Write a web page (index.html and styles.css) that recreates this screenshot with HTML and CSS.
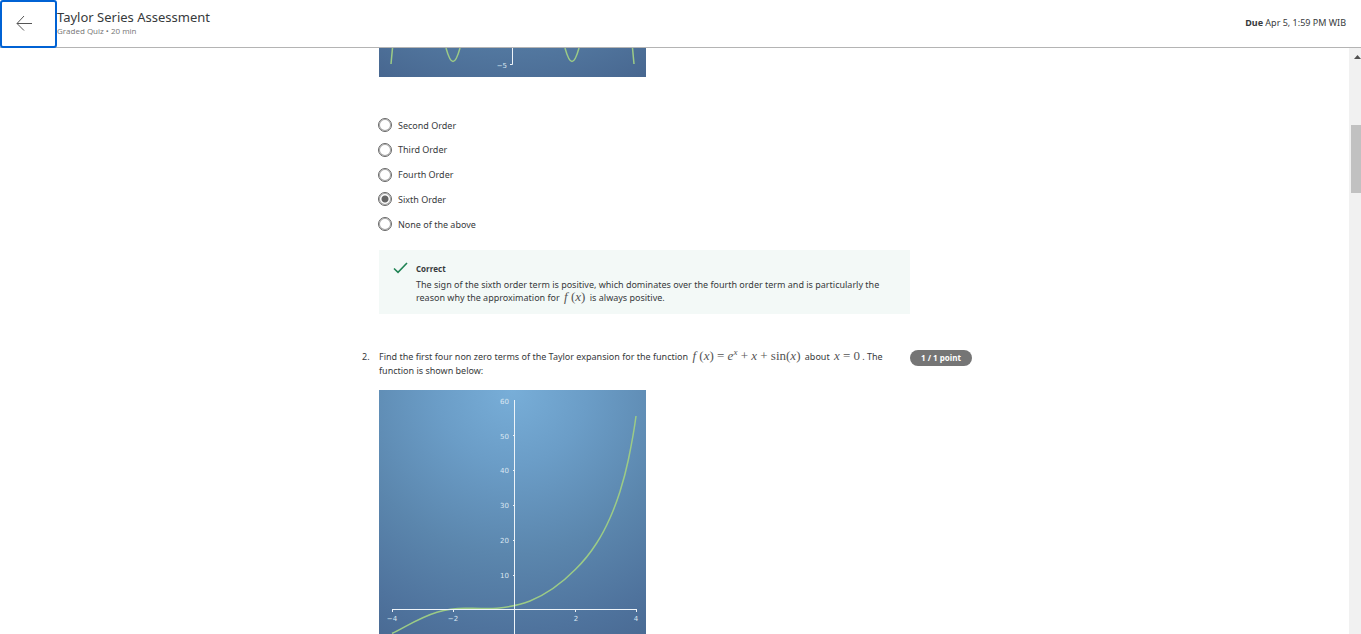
FILE: index.html
```html
<!DOCTYPE html>
<html lang="en">
<head>
<meta charset="utf-8">
<title>Taylor Series Assessment</title>
<link rel="stylesheet" href="styles.css">
</head>
<body>
<header class="topbar">
  <button class="back" type="button" aria-label="Back">
    <svg width="16" height="16" viewBox="0 0 16 16" fill="none" stroke="#555" stroke-width="1"><path d="M16 8.500H1M8 1 1 8.500 8 15.500"/></svg>
  </button>
  <div class="heading">
    <h1 class="title">Taylor Series Assessment</h1>
    <p class="subtitle">Graded Quiz • 20 min</p>
  </div>
  <p class="due"><b>Due</b> Apr 5, 1:59 PM WIB</p>
</header>
<div class="viewport">
  <main class="page">
    <div class="quiz">
      <section class="question">
        <div class="answer">
          <svg class="plot" width="267" height="29" viewBox="0 0 267 29" role="img" aria-label="Lower end of the plot">
            <defs><radialGradient id="low" gradientUnits="userSpaceOnUse" cx="133" cy="-238" r="300"><stop offset="0" stop-color="#78aed8"/><stop offset=".8" stop-color="#52779f"/><stop offset="1" stop-color="#47668f"/></radialGradient></defs>
            <rect width="267" height="29" fill="url(#low)"/>
            <path class="axis" d="M133.500 0V16.500H131"/>
            <path class="curve" d="M13.500 0 12 16M67 0C72 18 76 18 81 0M186 0C191 18 195 18 200 0M253.500 0 255 16"/>
            <text class="tick" x="128" y="20" text-anchor="end">−5</text>
          </svg>
          <fieldset class="options">
            <label class="option"><input type="radio" name="order">Second Order</label>
            <label class="option"><input type="radio" name="order">Third Order</label>
            <label class="option"><input type="radio" name="order">Fourth Order</label>
            <label class="option"><input type="radio" name="order" checked>Sixth Order</label>
            <label class="option"><input type="radio" name="order">None of the above</label>
          </fieldset>
          <div class="feedback">
            <svg class="tickmark" width="15" height="12" viewBox="0 0 15 12" fill="none" stroke="#1f8354" stroke-width="1.600"><path d="M1 6.500 5 10.300 14 1"/></svg>
            <div>
              <h2 class="verdict">Correct</h2>
              <p class="explain">The sign of the sixth order term is positive, which dominates over the fourth order term and is particularly the reason why the approximation for <span class="math"><i>f</i> (<i>x</i>)</span> is always positive.</p>
            </div>
          </div>
        </div>
      </section>
      <section class="question">
        <span class="number">2.</span>
        <div class="answer">
          <p class="prompt">Find the first four non zero terms of the Taylor expansion for the function <span class="math"><i>f</i> (<i>x</i>) = <i>e</i><sup>x</sup> + <i>x</i> + sin(<i>x</i>)</span> about <span class="math"><i>x</i> = 0</span>. The function is shown below:</p>
          <svg class="plot" width="267" height="267" viewBox="0 0 267 267" role="img" aria-label="Plot of the function from −4 to 4">
            <defs><radialGradient id="full" gradientUnits="userSpaceOnUse" cx="133" cy="0" r="300"><stop offset="0" stop-color="#78aed8"/><stop offset=".25" stop-color="#6b9dc7"/><stop offset=".55" stop-color="#5b86ad"/><stop offset=".8" stop-color="#4f739d"/><stop offset="1" stop-color="#47668f"/></radialGradient></defs>
            <rect width="267" height="267" fill="url(#full)"/>
            <path class="curve" d="M13 243.500C28 236 42 227 58 222.300S80 218.500 91 218.300 108 219 118 218.200C130 217 141 215 151 211 168 204 183 193 196.300 179.500 205 171 212 162 217.700 153 223 145 227 137 231 128 235 119 238 111 241 101.500 244 92 247 81 249.300 70 252 57 255 42 257 26"/>
            <path class="axis" d="M135.500 10V267M13 219.500H258M13.500 219V222M74.500 219V222M196.500 219V222M257.500 219V222M134 45.500H136M134 80.500H136M134 115.500H136M134 150.500H136M134 185.500H136"/>
            <g class="tick" text-anchor="end">
              <text x="130" y="14">60</text><text x="130" y="49">50</text><text x="130" y="83">40</text><text x="130" y="118">30</text><text x="130" y="153">20</text><text x="130" y="188">10</text>
            </g>
            <g class="tick" text-anchor="middle">
              <text x="13" y="231">−4</text><text x="74" y="231">−2</text><text x="197" y="231">2</text><text x="257" y="231">4</text>
            </g>
          </svg>
        </div>
        <span class="points">1 / 1 point</span>
      </section>
    </div>
  </main>
  <div class="scrollbar" aria-hidden="true">
    <svg class="arrow" width="7" height="4" viewBox="0 0 7 4"><path d="M0 4 3.500 0 7 4z" fill="#505050"/></svg>
    <div class="thumb"></div>
  </div>
</div>
</body>
</html>
```
FILE: styles.css
```css
* { box-sizing: border-box; }
body {
  margin: 0;
  height: 100vh;
  display: flex;
  flex-direction: column;
  overflow: hidden;
  background: #fff;
  color: #373a3c;
  font: 9px/13px "Noto Sans", "Open Sans", sans-serif;
}
h1, h2, p { margin: 0; }
.topbar {
  flex: none;
  display: flex;
  align-items: center;
  height: 48px;
  border-bottom: 1px solid #b4b4b4;
}
.back {
  flex: none;
  width: 57px;
  height: 48px;
  padding: 0 0 2px 14px;
  display: flex;
  align-items: center;
  background: #fff;
  border: 2px solid #0062d4;
  border-radius: 3px;
}
.heading { flex: 1; padding-bottom: 2px; }
.title { font-size: 13px; line-height: 17px; font-weight: 400; }
.subtitle { font: 8px/10px "Open Sans", sans-serif; color: #757575; }
.due { padding: 0 15px 2px 0; }
.viewport { flex: 1; min-height: 0; display: flex; }
.page { flex: 1; overflow: hidden; }
.quiz { max-width: 625px; margin: 0 auto; }
.question { display: flex; }
.question + .question { margin-top: 36px; }
.answer { width: 531px; margin-left: 17px; }
.number { width: 17px; }
.number + .answer { margin-left: 0; }
.plot { display: block; }
.axis { fill: none; stroke: #eef4f9; stroke-width: 1; }
.curve { fill: none; stroke: #9ccb86; stroke-width: 1.5; }
.tick { font: 7px "DejaVu Sans", sans-serif; fill: #dbe7f2; }
.options {
  height: 113px;
  margin: 41px 0 0;
  padding: 0;
  border: 0;
  display: flex;
  flex-direction: column;
  justify-content: space-between;
}
.option { display: flex; align-items: center; gap: 6px; }
.option input {
  appearance: none;
  width: 14px;
  height: 14px;
  margin: 0 0 0 -1px;
  border: 1px solid #666;
  box-shadow: inset 0 0 0 1px #aaa;
  border-radius: 50%;
}
.option input:checked { background: radial-gradient(circle, #666 3px, #fff 4px); }
.feedback {
  display: flex;
  align-items: flex-start;
  gap: 8px;
  margin-top: 19px;
  padding: 12px 14px 10px;
  background: #f3f9f7;
}
.tickmark { flex: none; }
.verdict { font: 700 8px/14px "Open Sans", sans-serif; }
.explain { margin-top: 2px; }
.prompt { width: 515px; line-height: 14px; margin-bottom: 12px; }
.math { padding: 0 2px; font: 13px/1 "Liberation Serif", serif; line-height: 0; color: #555; white-space: nowrap; }
.math sup { font-size: 9px; line-height: 0; font-style: italic; }
.points {
  height: 16px;
  padding: 0 11px;
  border-radius: 8px;
  background: #757575;
  color: #fff;
  font: 700 8px/16px "Open Sans", sans-serif;
  white-space: nowrap;
}
.scrollbar {
  flex: none;
  width: 12px;
  padding: 7px 0 0 2px;
  background: #f1f1f1;
}
.arrow { display: block; margin-left: 3px; }
.thumb { height: 68px; margin-top: 66px; background: #c1c1c1; }
```
